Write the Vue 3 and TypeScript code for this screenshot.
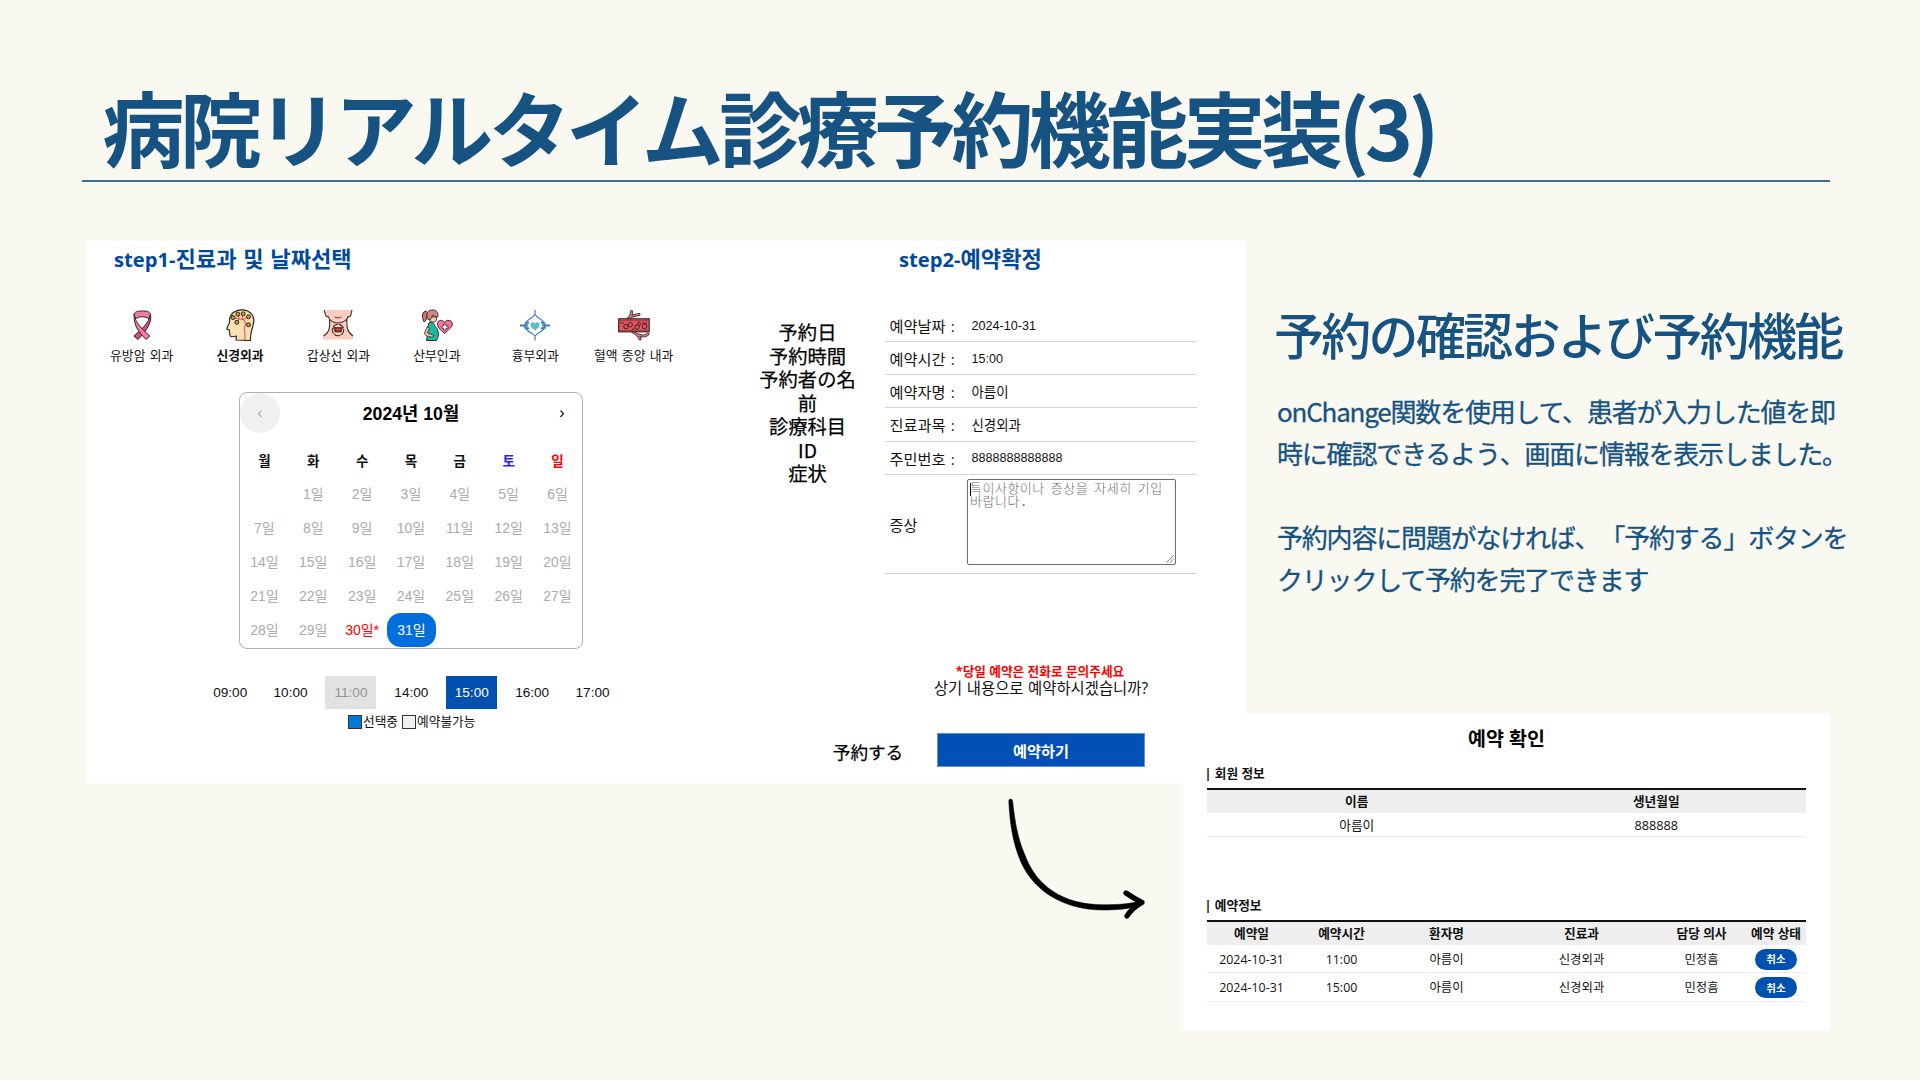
<script setup lang="ts">
interface Department {
  name: string
  icon: string
  selected?: boolean
}

interface DayCell {
  label: string
  state: 'past' | 'today' | 'selected' | 'empty'
}

interface Slot {
  time: string
  state?: 'selected' | 'closed'
}

interface Field {
  label: string
  value: string
  korean?: boolean
}

const departments: Department[] = [
  { name: '유방암 외과', icon: 'ribbon' },
  { name: '신경외과', icon: 'head', selected: true },
  { name: '갑상선 외과', icon: 'neck' },
  { name: '산부인과', icon: 'mother' },
  { name: '흉부외과', icon: 'chest' },
  { name: '혈액 종양 내과', icon: 'vessel' },
]

const weekdays = ['월', '화', '수', '목', '금', '토', '일']

const days: DayCell[] = [{ label: '', state: 'empty' }]
for (let d = 1; d <= 31; d++) {
  if (d === 30) days.push({ label: '30일*', state: 'today' })
  else if (d === 31) days.push({ label: '31일', state: 'selected' })
  else days.push({ label: `${d}일`, state: 'past' })
}

const slots: Slot[] = [
  { time: '09:00' },
  { time: '10:00' },
  { time: '11:00', state: 'closed' },
  { time: '14:00' },
  { time: '15:00', state: 'selected' },
  { time: '16:00' },
  { time: '17:00' },
]

const captions = ['予約日', '予約時間', '予約者の名', '前', '診療科目', 'ID', '症状']

const fields: Field[] = [
  { label: '예약날짜 :', value: '2024-10-31' },
  { label: '예약시간 :', value: '15:00' },
  { label: '예약자명 :', value: '아름이', korean: true },
  { label: '진료과목 :', value: '신경외과', korean: true },
  { label: '주민번호 :', value: '8888888888888' },
]

const bookings = [
  { date: '2024-10-31', time: '11:00', patient: '아름이', dept: '신경외과', doctor: '민정흠' },
  { date: '2024-10-31', time: '15:00', patient: '아름이', dept: '신경외과', doctor: '민정흠' },
]
</script>

<template>
  <div class="slide">
    <h1 class="title">病院リアルタイム診療予約機能実装(3)</h1>

    <main class="content">
      <section class="panel">
        <div class="step-one">
          <h2 class="step-title"><span class="latin">step1-</span>진료과 및 날짜선택</h2>

          <ul class="departments">
            <li v-for="dept in departments" :key="dept.name" :class="{ on: dept.selected }">
              <svg v-if="dept.icon === 'ribbon'" viewBox="0 0 32 32" class="dept-icon">
                <g stroke="#33222b" stroke-width="1" stroke-linejoin="round">
                  <path d="M23.500 7 C23.500 13 17 19 8 27 L12 30.500 C18 24 26.500 15 24.500 5 Z" fill="#d94f7c" />
                  <path d="M8 5 C10 2 12 2 16.200 2 C20.500 2 22.500 2 24.500 5 L23 10 C20 7 12.500 7 9.500 10 Z" fill="#ee7d9f" />
                  <path d="M8.200 5.500 C9 12 13 17.500 23.800 27 L20 30.500 C12 22.500 7.500 16 8.200 5.500 Z" fill="#f37d9d" />
                </g>
              </svg>
              <svg v-else-if="dept.icon === 'head'" viewBox="0 0 32 32" class="dept-icon">
                <path d="M12 31 L12.500 27 C9 28 6.500 27.800 6 26.500 C5.500 25 6.300 24 5.300 22.500 C6 21 4.500 20.700 3 20.200 C2 19 5 16 5.500 13.500 C5 4 12 .7 18 .8 C27 1 31 8 29.500 14 C29 19 26 22 26.500 31.500 Z" fill="#fde0b2" stroke="#2b2926" stroke-width="1.200" stroke-linejoin="round" />
                <path d="M20.500 31 C23 25 19 22 20.500 18 C22.500 15 21 11 18.500 10.500 M20.500 10 C18 11 14 10 10.500 9 M14 5 L15 10 M18.500 4.500 L18.500 11 M24 7 L20.500 10 M13 13 L15.500 10 M24 15.500 L21.500 14" fill="none" stroke="#f0526b" stroke-width="1.150" />
                <g fill="#c2a21c" stroke="#2b2926" stroke-width="1">
                  <circle cx="9" cy="8.500" r="2" /><circle cx="13.800" cy="5.200" r="2" />
                  <circle cx="19.200" cy="4.800" r="2" /><circle cx="24.500" cy="7.800" r="2" />
                  <circle cx="12.800" cy="13.300" r="2" /><circle cx="24.500" cy="15.800" r="2" />
                </g>
              </svg>
              <svg v-else-if="dept.icon === 'neck'" viewBox="0 0 32 32" class="dept-icon">
                <path d="M2 1 H30 L27 9 L25 10 C25 19 26 23 31 26 V30.500 H1 V26 C7 23 8 18 7 10 L4 8 Z" fill="#fdcdbd" />
                <path d="M2 1 L4 7 L6.500 8 C7 11 11 14 16 14 C21 14 25 11 26 8 L28.500 7 L30 1 M7.500 10 C8 18 8 23 1.500 27 M25 10 C24.500 18 25 23 31 27" fill="none" stroke="#413330" stroke-width="1.100" />
                <path d="M12.500 8 Q16 10 19.500 8" fill="none" stroke="#413330" stroke-width=".9" />
                <circle cx="16" cy="21" r="5.700" fill="#fad7ca" stroke="#413330" stroke-width="1.100" stroke-dasharray="6 .8" />
                <path d="M11.500 18.500 H20.500 L19 23 H13 Z" fill="#9b2d28" stroke="#55302b" stroke-width=".9" />
                <path d="M14 20.500 H18" stroke="#e24b40" stroke-width="1.200" />
              </svg>
              <svg v-else-if="dept.icon === 'mother'" viewBox="0 0 32 32" class="dept-icon">
                <path d="M6 2 C0 2 1 9 3 13 C6 11 6 8 6.500 5" fill="#c8786c" stroke="#362c30" stroke-width="1" />
                <path d="M9 8 H15.500 V11 L14 13 H9 Z" fill="#f9c8ae" stroke="#362c30" stroke-width=".8" />
                <path d="M6 9 C5 3 8 .7 12 1 C16 1 18 5 16.500 8 C13 8 12 6 11.500 6 C11 9 10 10 8 11 Z" fill="#d5887a" stroke="#362c30" stroke-width="1" />
                <path d="M8 14 C11 12 14 15 13.500 17 C18 20 18.500 27 15.500 31.500 H5.500 C7 26 5 24 6 20 Z" fill="#13bd9d" stroke="#362c30" stroke-width="1" />
                <path d="M6 18 L3.500 24 C4 27 8 28 12 28 L13 26.500 L6.500 24 L8.500 19 Z" fill="#f5bca4" stroke="#362c30" stroke-width=".8" />
                <path d="M23.500 24.500 C19 20.500 16.500 18 16.500 15 C16.500 11 21.500 10 23.500 13.500 C25.500 10 31.300 11 31.300 15 C31.300 18 28 20.500 23.500 24.500Z" fill="#fb7198" stroke="#362c30" stroke-width="1" />
                <path d="M22.500 15.200 H25 V17 H27 V19.200 H25 V21 H22.500 V19.200 H20.800 V17 H22.500 Z" fill="#fff" stroke="#362c30" stroke-width=".8" />
              </svg>
              <svg v-else-if="dept.icon === 'chest'" viewBox="0 0 32 32" class="dept-icon">
                <g fill="none" stroke="#3c7fc0" stroke-width="1.200">
                  <path d="M16 1 V5.500 C13 10 7 10 5.500 16.500 C7 23 13 23 16 27 V31.500 M16 5.500 C19 10 25 10 26.500 16.500 C25 23 19 23 16 27" />
                  <path d="M1 16.500 H9 M23 16.500 H31 M6 14.500 L10 13.500 M5.500 18.500 L10 19.500 M26 14.500 L22 13.500 M26.500 18.500 L22 19.500" stroke-width="1.900" />
                </g>
                <path d="M16 21.500 C12.500 19 11.500 17.500 11.500 15.700 C11.500 12.800 15 12.500 16 14.800 C17 12.500 20.700 12.800 20.700 15.700 C20.700 17.500 19 19 16 21.500Z" fill="#55c1cc" />
              </svg>
              <svg v-else viewBox="0 0 32 32" class="dept-icon">
                <g fill="none" stroke-linecap="round">
                  <path d="M9 11 C12 8 13.500 7 13.500 2.500 M12.500 8 C16 6 18 6 21 5.500" stroke="#423033" stroke-width="3" />
                  <path d="M9 11 C12 8 13.500 7 13.500 2.500 M12.500 8 C16 6 18 6 21 5.500" stroke="#e3838a" stroke-width="1.300" />
                  <path d="M15 23 C19 25 21 27 22 30 M20 26 C25 28 28 27 30 25" stroke="#423033" stroke-width="3" />
                  <path d="M15 23 C19 25 21 27 22 30 M20 26 C25 28 28 27 30 25" stroke="#e3838a" stroke-width="1.300" />
                </g>
                <rect x=".7" y="9.800" width="30.500" height="13" fill="#ea555f" stroke="#39272a" stroke-width="1.200" />
                <path d="M1 11.700 H31 M1 21.300 H31" stroke="#9a3b44" stroke-width="1" />
                <g fill="#e2525c" stroke="#39272a" stroke-width="1">
                  <circle cx="8" cy="17.500" r="2.300" /><circle cx="12.300" cy="15.700" r="2.200" />
                  <circle cx="19" cy="18" r="2.300" /><circle cx="21" cy="14.700" r="1.500" /><circle cx="26.500" cy="17.500" r="2.400" />
                  <path d="M2 14 H6 M14 20 H16 M24 14 H29" />
                </g>
              </svg>
              <span>{{ dept.name }}</span>
            </li>
          </ul>

          <div class="calendar">
            <div class="cal-head">
              <button class="nav prev" type="button">‹</button>
              <strong>2024년 10월</strong>
              <button class="nav next" type="button">›</button>
            </div>
            <div class="week">
              <span v-for="(w, i) in weekdays" :key="w" :class="{ sat: i === 5, sun: i === 6 }">{{ w }}</span>
            </div>
            <div class="days">
              <span v-for="(day, i) in days" :key="i" :class="day.state">{{ day.label }}</span>
            </div>
          </div>

          <div class="slots">
            <div v-for="slot in slots" :key="slot.time" class="slot-cell">
              <span class="slot" :class="slot.state">{{ slot.time }}</span>
            </div>
          </div>
          <div class="legend">
            <i class="swatch blue"></i><span>선택중</span>
            <i class="swatch gray"></i><span>예약불가능</span>
          </div>
        </div>

        <div class="captions">
          <p v-for="c in captions" :key="c">{{ c }}</p>
          <p class="reserve-caption">予約する</p>
        </div>

        <div class="step-two">
          <h2 class="step-title"><span class="latin">step2-</span>예약확정</h2>
          <div class="form">
            <div v-for="f in fields" :key="f.label" class="field">
              <label>{{ f.label }}</label>
              <span :class="{ korean: f.korean }">{{ f.value }}</span>
            </div>
            <div class="field symptom">
              <label>증상</label>
              <div class="memo">
                <i class="caret"></i>
                <p>특이사항이나 증상을 자세히 기입<br />바랍니다.</p>
                <svg class="grip" viewBox="0 0 8 8"><path d="M0.500 7.500 L7.500 0.500 M4 7.500 L7.500 4" stroke="#777" stroke-width=".9" /></svg>
              </div>
            </div>
          </div>
          <p class="notice">*당일 예약은 전화로 문의주세요</p>
          <p class="question">상기 내용으로 예약하시겠습니까?</p>
          <button class="submit" type="button">예약하기</button>
        </div>
      </section>

      <aside class="notes">
        <h2>予約の確認および予約機能</h2>
        <p>onChange関数を使用して、患者が入力した値を即<br />時に確認できるよう、画面に情報を表示しました。</p>
        <p>予約内容に問題がなければ、「予約する」ボタンを<br />クリックして予約を完了できます</p>
      </aside>
    </main>

    <svg class="arrow" viewBox="0 0 160 135">
      <path d="M13.800 10 C14.800 33 18 50 23.500 65 C35 98 67 119 108 119 C122 119 136 118 148 113.500 L147 109.500 C134 113.500 121 113.700 108 113.700 C68 113.700 41 95 29.500 63 C23 48 20 32 17.600 10 A1.900 1.900 0 0 0 13.800 10Z" stroke="#000" stroke-width=".5" />
      <path d="M131 102 C136 105.500 141 108.500 147 111.300 C141 115 135 120 132 125" fill="none" stroke="#000" stroke-width="5.200" stroke-linecap="round" stroke-linejoin="round" />
    </svg>

    <section class="confirm">
      <h2>예약 확인</h2>
      <h3>| 회원 정보</h3>
      <div class="table member">
        <div class="row head"><span>이름</span><span>생년월일</span></div>
        <div class="row"><span>아름이</span><span>888888</span></div>
      </div>
      <h3 class="second">| 예약정보</h3>
      <div class="table booking">
        <div class="row head">
          <span>예약일</span><span>예약시간</span><span>환자명</span><span>진료과</span><span>담당 의사</span><span>예약 상태</span>
        </div>
        <div v-for="b in bookings" :key="b.time" class="row">
          <span>{{ b.date }}</span><span>{{ b.time }}</span><span>{{ b.patient }}</span><span>{{ b.dept }}</span><span>{{ b.doctor }}</span>
          <span><button class="cancel" type="button">취소</button></span>
        </div>
      </div>
    </section>
  </div>
</template>

<style>
body {
  margin: 0;
  background: #faf9f1;
}
</style>

<style scoped>
* {
  box-sizing: border-box;
}
h1, h2, h3, p, ul {
  margin: 0;
  padding: 0;
}
button {
  border: 0;
  padding: 0;
  font-family: inherit;
}
.slide {
  position: relative;
  width: 1920px;
  height: 1080px;
  overflow: hidden;
  background: #faf9f1;
  color: #111;
  font-family: 'Open Sans', 'Noto Sans CJK KR', sans-serif;
  white-space: nowrap;
}
.title {
  margin: 0 90px 0 82px;
  padding: 66px 0 0 20.500px;
  height: 182px;
  border-bottom: 2px solid #3d6f95;
  color: #165382;
  font: 700 82px/120px 'Noto Sans CJK JP', sans-serif;
  letter-spacing: -4.600px;
}
.content {
  display: flex;
  padding-left: 87px;
  margin-top: 59px;
}
.panel {
  display: flex;
  width: 1159px;
  height: 542px;
  background: #fff;
}
.step-one {
  width: 653px;
}
.step-title {
  height: 68px;
  padding-left: 27px;
  color: #004a9c;
  font-size: 22.100px;
  font-weight: 700;
  line-height: 34px;
  word-spacing: 1px;
}
.step-title .latin {
  font-size: 20.200px;
}
.departments {
  display: flex;
  list-style: none;
  margin-left: 5.500px;
}
.departments li {
  display: flex;
  flex-direction: column;
  align-items: center;
  width: 98.400px;
  font-size: 12.800px;
  line-height: 18px;
  word-spacing: 1px;
}
.departments .on {
  font-weight: 700;
}
.dept-icon {
  width: 32px;
  height: 32px;
  margin-bottom: 5px;
}
.calendar {
  width: 344px;
  height: 257px;
  margin: 28px 0 0 152px;
  border: 1px solid #b0b0b0;
  border-radius: 8px;
  font-family: 'Liberation Sans', 'Noto Sans CJK KR', sans-serif;
}
.cal-head {
  display: flex;
  justify-content: space-between;
  align-items: center;
  height: 40px;
}
.cal-head strong {
  padding-bottom: 2px;
  font-size: 17.700px;
  color: #000;
}
.nav {
  width: 40px;
  height: 40px;
  margin-top: -1px;
  border-radius: 50%;
  background: none;
  font-size: 16px;
  color: #000;
}
.nav.prev {
  background: #f0f0f0;
  color: #adadad;
}
.week,
.days {
  display: grid;
  grid-template-columns: repeat(7, 48.850px);
  text-align: center;
}
.week {
  margin-top: 12px;
  font-size: 13.500px;
  font-weight: 700;
  line-height: 34px;
  color: #111;
}
.week .sat {
  color: #2a1fff;
}
.week .sun {
  color: #f00;
}
.days {
  margin-top: -2px;
  font-size: 14px;
  line-height: 34px;
}
.days .past {
  color: #ababab;
}
.days .today {
  color: #f00;
}
.days .selected {
  margin-right: -1px;
  border-radius: 14px;
  background: #006edc;
  color: #fff;
}
.slots {
  display: flex;
  margin: 27px 0 0 113px;
  font: 13.600px/33px 'Liberation Sans', sans-serif;
}
.slot-cell {
  display: flex;
  justify-content: center;
  width: 60.400px;
}
.slot {
  width: 51px;
  text-align: center;
}
.slot.closed {
  background: #e2e2e2;
  color: #979191;
}
.slot.selected {
  background: #0250b0;
  color: #fff;
}
.legend {
  display: flex;
  align-items: center;
  margin: 4px 0 0 261px;
  font-size: 12.700px;
  line-height: 18px;
}
.legend span {
  margin: -1px 4px 0 1px;
}
.swatch {
  width: 14px;
  height: 14px;
  border: 1px solid #333;
}
.swatch.blue {
  background: #0078d7;
}
.swatch.gray {
  background: #f0f0f0;
}
.captions {
  width: 135px;
  padding-top: 80px;
  text-align: center;
  color: #000;
  font: 400 19.300px/23.500px 'Noto Sans CJK JP', sans-serif;
  -webkit-text-stroke: .25px #000;
}
.captions .reserve-caption {
  margin: 254px 0 0 52px;
  width: 152px;
  font-size: 17.600px;
}
.step-two {
  width: 371px;
}
.step-two .step-title {
  height: 68px;
  padding-left: 24px;
}
.form {
  width: 312px;
  margin-left: 10px;
  border-bottom: 1px solid #d0d0d0;
}
.field {
  display: flex;
  align-items: center;
  height: 33.150px;
  padding-left: 4.500px;
  border-bottom: 1px solid #d4d4d4;
  font-size: 15.200px;
  word-spacing: 1.500px;
}
.field label {
  width: 82px;
}
.field span {
  padding-top: 1px;
  font: 12.600px 'Liberation Sans', sans-serif;
}
.field .korean {
  padding-top: 0;
  font: 13.400px/18px 'Noto Sans CJK KR', sans-serif;
}
.field.symptom {
  height: 98.500px;
  border: 0;
}
.field.symptom label {
  width: 77.500px;
}
.memo {
  position: relative;
  width: 209px;
  height: 86px;
  margin-top: -4px;
  padding: 3px 2px;
  border: 1px solid #6c6c6c;
  border-radius: 2px;
  color: #707070;
  font: 300 13px/13.400px 'Liberation Mono', 'Noto Sans CJK KR', monospace;
  letter-spacing: .5px;
  word-spacing: -2.200px;
}
.caret {
  position: absolute;
  left: 2px;
  top: 3px;
  width: 1px;
  height: 13px;
  background: #000;
}
.grip {
  position: absolute;
  right: 1px;
  bottom: 1px;
  width: 8px;
  height: 8px;
}
.notice {
  width: 330px;
  margin-top: 87.500px;
  text-align: center;
  color: #f00;
  font-size: 12.700px;
  font-weight: 700;
  line-height: 18px;
}
.question {
  width: 332px;
  text-align: center;
  font-size: 15.400px;
  line-height: 17px;
  word-spacing: .6px;
}
.submit {
  display: block;
  width: 208px;
  height: 34px;
  margin: 36px 0 0 62px;
  border: 1px solid #5f94d6;
  background: #0250b7;
  color: #fff;
  font-size: 15.200px;
  font-weight: 700;
}
.notes {
  margin-left: 28px;
  padding-top: 52px;
  color: #165382;
  font-family: 'Noto Sans CJK JP', sans-serif;
  text-spacing-trim: space-all;
}
.notes h2 {
  height: 96.500px;
  font-size: 50px;
  font-weight: 500;
  line-height: 80px;
  letter-spacing: -2.700px;
}
.notes p {
  margin: 0 0 42px 3px;
  font-size: 26px;
  line-height: 42.100px;
  letter-spacing: -1.200px;
  -webkit-text-stroke: .3px #165382;
}
.arrow {
  position: absolute;
  left: 995px;
  top: 791px;
  width: 160px;
  height: 135px;
}
.confirm {
  position: absolute;
  left: 1181px;
  top: 714px;
  width: 648.500px;
  height: 316px;
  padding: 0 23.500px 0 26px;
  background: #fff;
  font-size: 12.700px;
}
.confirm h2 {
  height: 50px;
  text-align: center;
  color: #000;
  font-size: 19.500px;
  font-weight: 700;
  line-height: 50px;
}
.confirm h3 {
  height: 24px;
  margin-left: -2.500px;
  font-size: 12.700px;
  font-weight: 700;
  line-height: 18px;
}
.confirm h3.second {
  margin-top: 58px;
}
.table {
  border-top: 2px solid #111;
}
.row {
  display: grid;
  height: 23.500px;
  border-bottom: 1px solid #ececec;
  line-height: 24.500px;
  text-align: center;
}
.row.head {
  height: 23px;
  border: 0;
  background: #eee;
  font-weight: 700;
  line-height: 22.500px;
}
.member {
  height: 50px;
}
.member .row {
  grid-template-columns: 1fr 1fr;
}
.booking .row {
  grid-template-columns: 89px 91px 119px 151px 89px 60px;
}
.booking .row:not(.head) {
  height: 28.300px;
  line-height: 30px;
  font-size: 12.400px;
}
.cancel {
  width: 42px;
  height: 20.500px;
  border-radius: 10.500px;
  background: #0250b0;
  color: #fff;
  font-size: 10.500px;
  font-weight: 700;
  line-height: 20px;
  vertical-align: top;
  margin-top: 4px;
}
</style>
